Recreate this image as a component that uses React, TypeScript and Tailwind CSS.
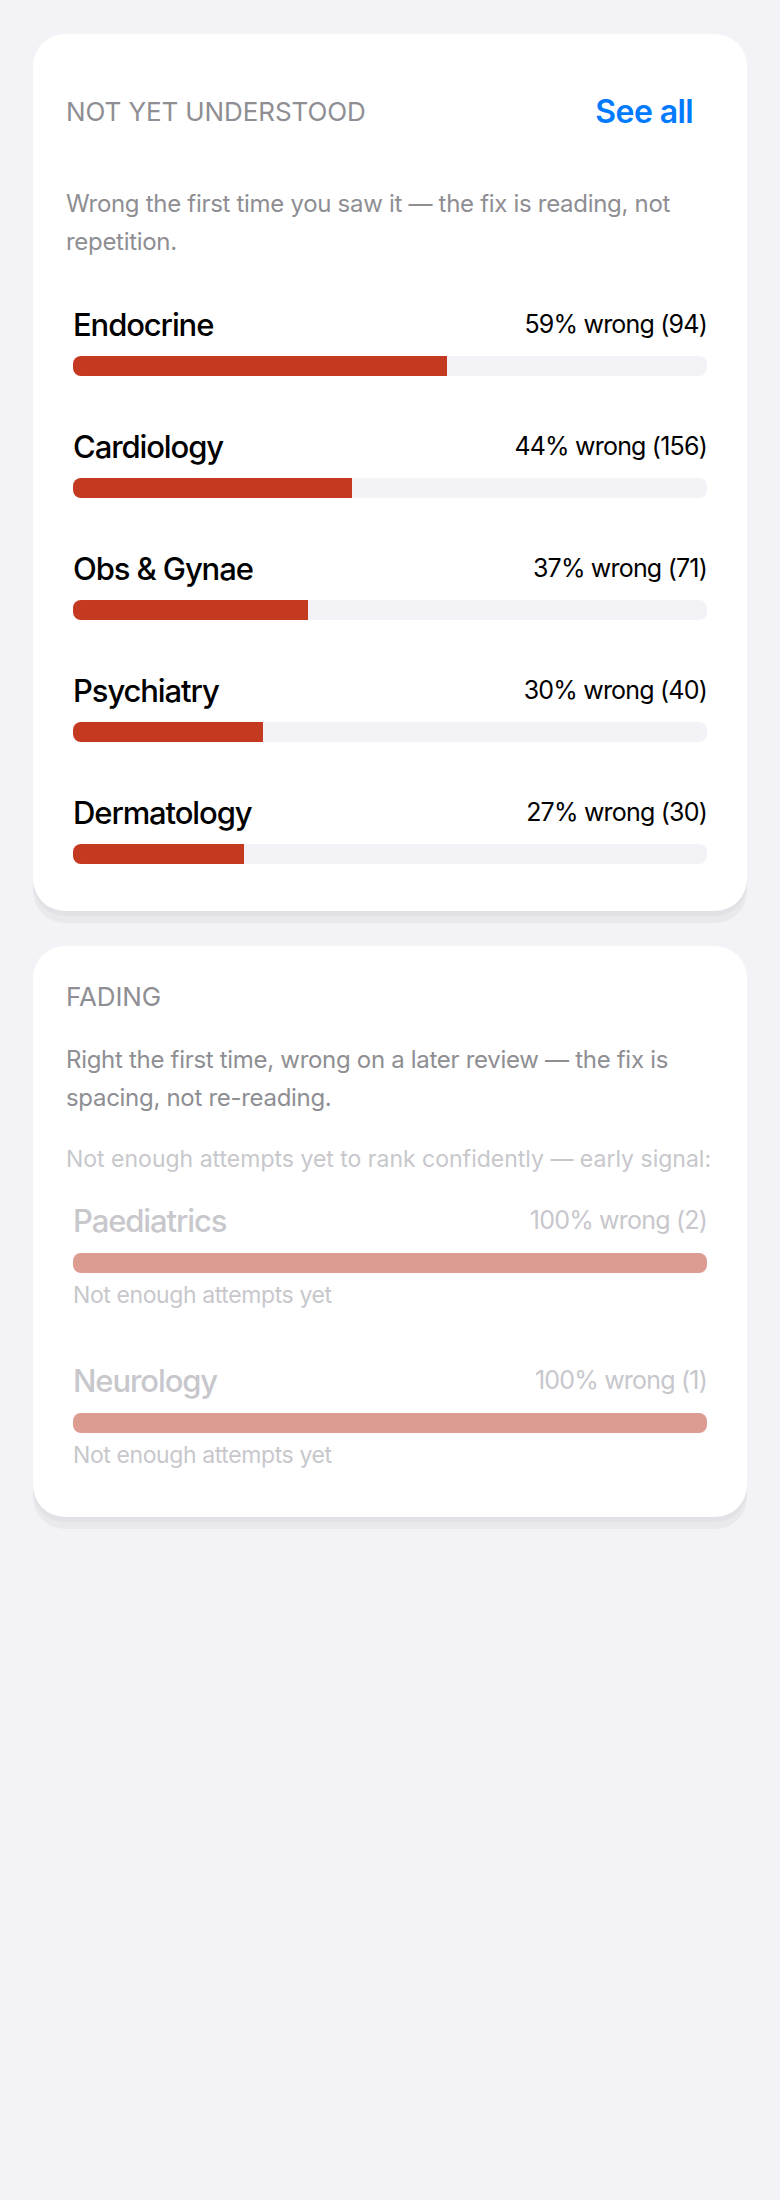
import React from 'react';

type Row = {name: string; pct: number; count: number};

const weak: Row[] = [
	{name: 'Endocrine', pct: 59, count: 94},
	{name: 'Cardiology', pct: 44, count: 156},
	{name: 'Obs & Gynae', pct: 37, count: 71},
	{name: 'Psychiatry', pct: 30, count: 40},
	{name: 'Dermatology', pct: 27, count: 30},
];

const fading: Row[] = [
	{name: 'Paediatrics', pct: 100, count: 2},
	{name: 'Neurology', pct: 100, count: 1},
];

function Card({children}: {children: React.ReactNode}) {
	return (
		<section className="bg-white rounded-[32px] px-[33px] pt-[35px] pb-[47px] shadow-[0_5px_0_#e2e2e6,0_12px_0_#e9e9ed]">
			{children}
		</section>
	);
}

function Bar({pct, faded}: {pct: number; faded?: boolean}) {
	return (
		<div className="h-[20px] rounded-[8px] bg-[#f2f2f7] overflow-hidden">
			<div
				className={faded ? 'h-full bg-[#dc9c92]' : 'h-full bg-[#c43a20]'}
				style={{width: `${pct}%`}}
			/>
		</div>
	);
}

export default function App() {
	return (
		<div
			className="min-h-[2200px] bg-[#f2f2f7] px-[33px] pt-[34px] flex flex-col gap-[35px]"
			style={{fontFamily: 'Inter, "Noto Sans", sans-serif'}}
		>
			<Card>
				<div className="h-[86px] flex items-center justify-between">
					<h2 className="text-[26px] leading-[32px] text-[#8e8e93] uppercase tracking-[-0.1px]">
						Not yet understood
					</h2>
					<button className="mr-[21px] text-[32px] leading-[40px] font-semibold tracking-[-0.6px] text-[#007aff]">
						See all
					</button>
				</div>
				<p className="mt-[30px] text-[24px] leading-[38px] text-[#8e8e93] tracking-[-0.3px]">
					Wrong the first time you saw it — the fix is reading, not repetition.
				</p>
				<div className="mt-[45px] px-[7px] flex flex-col gap-[52px]">
					{weak.map((r) => (
						<div key={r.name}>
							<div className="h-[38px] flex items-center justify-between text-black">
								<span className="text-[31px] font-medium tracking-[-1.1px]">{r.name}</span>
								<span className="text-[25px] tracking-[-0.8px]">
									{r.pct}% wrong ({r.count})
								</span>
							</div>
							<div className="mt-[12px]">
								<Bar pct={r.pct} />
							</div>
						</div>
					))}
				</div>
			</Card>

			<Card>
				<h2 className="text-[26px] leading-[32px] text-[#8e8e93] uppercase tracking-[-0.1px]">Fading</h2>
				<p className="mt-[28px] text-[24px] leading-[38px] text-[#8e8e93] tracking-[-0.3px]">
					Right the first time, wrong on a later review — the fix is spacing, not re-reading.
				</p>
				<p className="mt-[27px] text-[23px] leading-[30px] text-[#c7c7cc] whitespace-nowrap">
					Not enough attempts yet to rank confidently — early signal:
				</p>
				<div className="mt-[28px] px-[7px] flex flex-col gap-[52px]">
					{fading.map((r) => (
						<div key={r.name}>
							<div className="h-[38px] flex items-center justify-between text-[#c7c7cc]">
								<span className="text-[31px] font-medium tracking-[-1.1px]">{r.name}</span>
								<span className="text-[25px] tracking-[-0.8px]">
									{r.pct}% wrong ({r.count})
								</span>
							</div>
							<div className="mt-[13px]">
								<Bar pct={r.pct} faded />
							</div>
							<p className="mt-[7px] text-[23px] leading-[30px] text-[#c7c7cc] tracking-[-0.4px]">
								Not enough attempts yet
							</p>
						</div>
					))}
				</div>
			</Card>
		</div>
	);
}
